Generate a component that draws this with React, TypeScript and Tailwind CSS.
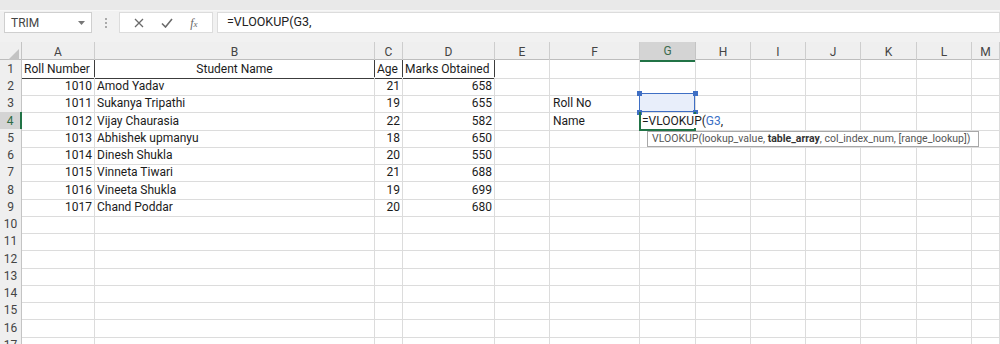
import React from "react";

const GRID =
  "grid grid-cols-[22px_73px_280px_28px_92px_55px_90px_56px_55px_55px_55px_56px_55px_1fr]";

const rows: (string | number)[][] = [
  [1010, "Amod Yadav", 21, 658],
  [1011, "Sukanya Tripathi", 19, 655],
  [1012, "Vijay Chaurasia", 22, 582],
  [1013, "Abhishek upmanyu", 18, 650],
  [1014, "Dinesh Shukla", 20, 550],
  [1015, "Vinneta Tiwari", 21, 688],
  [1016, "Vineeta Shukla", 19, 699],
  [1017, "Chand Poddar", 20, 680],
];

const letters = ["A", "B", "C", "D", "E", "F", "G", "H", "I", "J", "K", "L", "M"];

function Cell({
  children,
  align = "left",
  dark = false,
  className = "",
}: {
  children?: React.ReactNode;
  align?: "left" | "right" | "center";
  dark?: boolean;
  className?: string;
}) {
  const a =
    align === "right" ? "justify-end pr-[2px]" : align === "center" ? "justify-center" : "justify-start pl-[2px]";
  return (
    <div
      className={`flex items-end pb-[1px] border-r border-b whitespace-nowrap overflow-visible leading-[15px] ${a} ${
        dark ? "border-[#3c3c3c]" : "border-[#dcdcdc]"
      } ${className}`}
    >
      {children}
    </div>
  );
}

function RowHeader({ n, active }: { n: number; active?: boolean }) {
  return (
    <div
      className={`flex items-center justify-center border-b border-[#d0d0d0] text-[12px] ${
        active
          ? "bg-[#d4d4d4] text-[#2e6b45] border-r-2 border-r-[#217346]"
          : "bg-[#efefef] text-[#444] border-r border-r-[#c4c4c4]"
      }`}
    >
      {n}
    </div>
  );
}

export default function App() {
  const heights = ["h-[17px]", "h-[17px]", "h-[18px]", "h-[17px]"];
  const allRows = Array.from({ length: 17 }, (_, i) => i + 1);

  return (
    <div
      className="relative w-[1000px] h-[344px] overflow-hidden bg-white text-[#1b1b1b]"
      style={{ fontFamily: "Roboto, 'Liberation Sans', sans-serif" }}
    >
      {/* top ribbon remnant */}
      <div className="h-[11px] bg-[#e9e9e9] border-b border-[#f7f7f7]" />
      {/* formula bar */}
      <div className="h-[31px] bg-[#f1f1f1] flex items-start pt-[1px] pl-[4px]">
        <div className="w-[88px] h-[21px] bg-white border border-[#cfcfcf] flex items-center justify-between pl-[6px] pr-[6px] text-[12px] text-[#444]">
          <span>TRIM</span>
          <svg width="7" height="4" viewBox="0 0 7 4">
            <path d="M0 0h7L3.5 4z" fill="#777" />
          </svg>
        </div>
        <div className="w-[27px] h-[21px] flex flex-col items-center justify-center gap-[2px]">
          <div className="w-[2px] h-[2px] bg-[#aaa]" />
          <div className="w-[2px] h-[2px] bg-[#aaa]" />
          <div className="w-[2px] h-[2px] bg-[#aaa]" />
        </div>
        <div className="w-[94px] h-[21px] bg-white border border-[#dcdcdc] flex items-center justify-around px-[6px] text-[#6a6a6a]">
          <svg width="10" height="10" viewBox="0 0 10 10">
            <path d="M1 1L9 9M9 1L1 9" stroke="#6a6a6a" strokeWidth="1.3" />
          </svg>
          <svg width="12" height="10" viewBox="0 0 12 10">
            <path d="M1 5.5L4.5 9L11 1" stroke="#6a6a6a" strokeWidth="1.6" fill="none" />
          </svg>
          <span
            className="text-[12px] italic text-[#666]"
            style={{ fontFamily: "'Liberation Serif', serif" }}
          >
            f<span className="text-[9px]">x</span>
          </span>
        </div>
        <div className="ml-[4px] flex-1 h-[21px] bg-white border border-[#dcdcdc] flex items-center pl-[9px] text-[12.5px] text-[#222]">
          =VLOOKUP(G3,
        </div>
      </div>

      {/* column headers */}
      <div className={`${GRID} h-[18px] bg-[#efefef] border-b border-[#bdbdbd]`}>
        <div className="relative border-r border-[#c4c4c4]">
          <svg className="absolute right-[2px] bottom-[2px]" width="11" height="11" viewBox="0 0 11 11">
            <path d="M11 0V11H0z" fill="#c3c3c3" />
          </svg>
        </div>
        {letters.map((l) => (
          <div
            key={l}
            className={`flex items-center justify-center text-[12px] ${
              l === "G"
                ? "bg-[#d4d4d4] text-[#3d6b4e] border-b-2 border-[#217346] border-r border-r-[#c4c4c4]"
                : "text-[#444] border-r border-[#cdcdcd]"
            }`}
          >
            {l}
          </div>
        ))}
      </div>

      {/* rows */}
      {allRows.map((r, i) => {
        const h = heights[i % 4];
        const data = r >= 2 && r <= 9 ? rows[r - 2] : null;
        return (
          <div key={r} className={`${GRID} ${h} text-[12px]`}>
            <RowHeader n={r} active={r === 4} />
            {r === 1 ? (
              <>
                <Cell dark>Roll Number</Cell>
                <Cell dark align="center">
                  Student Name
                </Cell>
                <Cell dark>Age</Cell>
                <Cell dark>Marks Obtained</Cell>
              </>
            ) : (
              <>
                <Cell align="right">{data ? data[0] : null}</Cell>
                <Cell>{data ? data[1] : null}</Cell>
                <Cell align="right">{data ? data[2] : null}</Cell>
                <Cell align="right">{data ? data[3] : null}</Cell>
              </>
            )}
            <Cell />
            <Cell className="pl-[3px]">{r === 3 ? "Roll No" : r === 4 ? "Name" : null}</Cell>
            {r === 3 ? (
              <div className="relative border-r border-b border-[#dcdcdc] bg-[#e8eefa]">
                <div className="absolute -left-[1px] -top-[1px] right-0 bottom-0 border-[1.5px] border-[#3f6fc4]" />
                <div className="absolute -left-[3px] -top-[3px] w-[5px] h-[5px] bg-[#3f6fc4]" />
                <div className="absolute -right-[3px] -top-[3px] w-[5px] h-[5px] bg-[#3f6fc4]" />
                <div className="absolute -left-[3px] -bottom-[3px] w-[5px] h-[5px] bg-[#3f6fc4]" />
                <div className="absolute -right-[3px] -bottom-[3px] w-[5px] h-[5px] bg-[#3f6fc4]" />
              </div>
            ) : r === 4 ? (
              <div className="relative z-10 border-2 border-t-0 border-[#217346] -ml-[1px]">
                <div className="absolute left-[1px] bottom-[1px] h-[14px] bg-white whitespace-nowrap leading-[14px] pr-[1px] text-[12px]">
                  =VLOOKUP(<span className="text-[#3a6fc4]">G3</span>,
                </div>
              </div>
            ) : (
              <Cell />
            )}
            <Cell />
            <Cell />
            <Cell />
            <Cell />
            <Cell />
            <Cell />
          </div>
        );
      })}

      {/* function tooltip */}
      <div
        className="absolute left-[647px] top-[131px] w-[332px] h-[16px] bg-white border border-[#a8a8a8] flex items-center pl-[4px] text-[10.5px] text-[#555] whitespace-nowrap z-20"
        style={{ fontFamily: "Roboto, 'Liberation Sans', sans-serif" }}
      >
        VLOOKUP(lookup_value,&nbsp;<b className="font-bold text-[#333]">table_array</b>, col_index_num, [range_lookup])
      </div>
    </div>
  );
}
